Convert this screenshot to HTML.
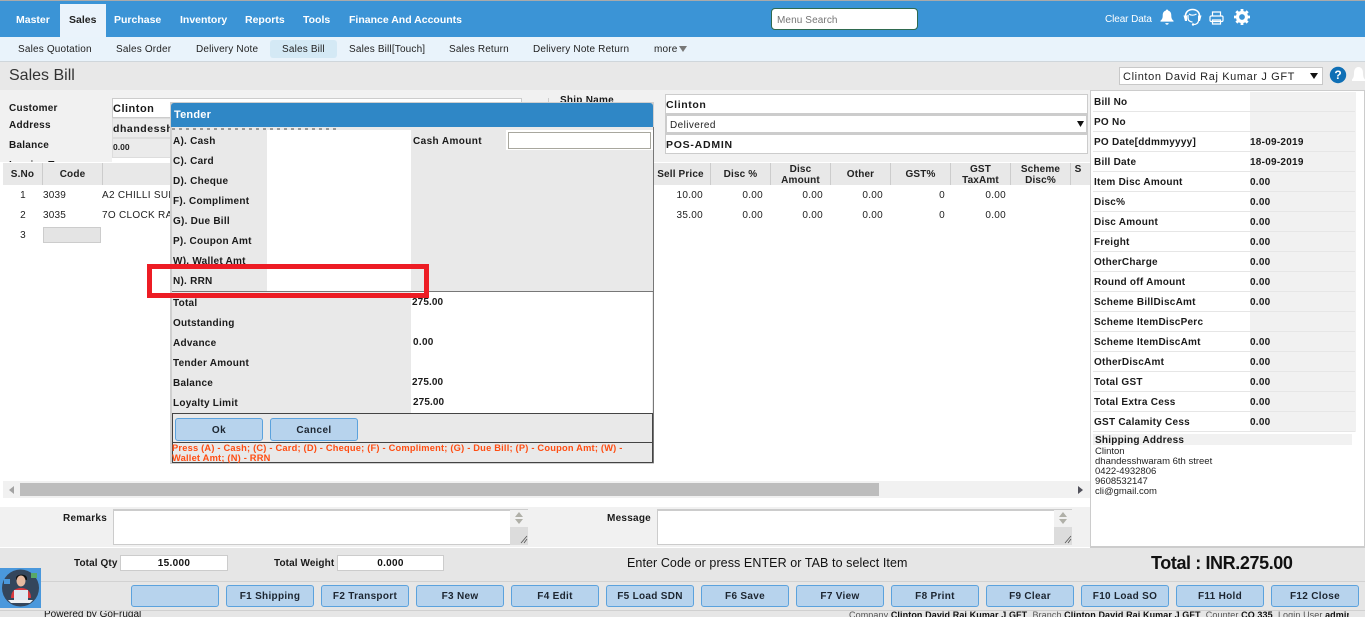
<!DOCTYPE html>
<html><head><meta charset="utf-8"><title>Sales Bill</title>
<style>
html,body{margin:0;padding:0;width:1365px;height:617px;overflow:hidden;background:#fff}
body{position:relative;font-family:"Liberation Sans",Arial,sans-serif;font-size:10px;color:#111}
.b,.t,.m,.s,.l,.v,.n,.h,.k{position:absolute;white-space:nowrap;line-height:12px}
.t,.m,.s,.l,.v,.n,.h{margin-top:1px}
.b{box-sizing:border-box}
.m{color:#fff;font-weight:bold;font-size:10.5px;letter-spacing:0;top:13px}
.s{color:#222;font-size:10px;letter-spacing:.17px;top:43px}
.l{font-weight:bold;font-size:10px;letter-spacing:.25px;color:#1a1a1a}
.v{font-weight:bold;font-size:10px;letter-spacing:.25px;color:#1a1a1a;left:1250px}
.n{font-size:10px;letter-spacing:.3px;color:#222;text-align:right;width:60px}
.h{font-weight:bold;font-size:10px;letter-spacing:.15px;color:#222;text-align:center;line-height:11px}
.k{box-sizing:border-box;top:585px;width:88px;height:22px;background:#b7d3ed;border:1px solid #5ba2dd;border-radius:3px;text-align:center;font-weight:bold;font-size:10px;letter-spacing:.3px;line-height:21px;color:#1c2530}
.rule{position:absolute;left:1093px;width:262px;height:1px;background:#e6e6e6}
</style></head><body>

<!-- top bar -->
<div class="b" style="left:0;top:0;width:1365px;height:1px;background:#aaa"></div>
<div class="b" style="left:0;top:1px;width:1365px;height:36px;background:#3b94d6"></div>
<div class="b" style="left:60px;top:4px;width:46px;height:33px;background:#eaf3fb"></div>
<span class="m" style="left:16px">Master</span>
<span class="m" style="left:69px;color:#222">Sales</span>
<span class="m" style="left:114px">Purchase</span>
<span class="m" style="left:180px">Inventory</span>
<span class="m" style="left:245px">Reports</span>
<span class="m" style="left:303px">Tools</span>
<span class="m" style="left:349px">Finance And Accounts</span>
<div class="b" style="left:771px;top:8px;width:147px;height:22px;background:#fff;border:1px solid #2f6a4f;border-radius:4px"></div>
<span class="t" style="left:777px;top:14px;font-size:10px;letter-spacing:.1px;color:#757575">Menu Search</span>
<span class="t" style="left:1105px;top:13px;color:#fff;font-size:10px;letter-spacing:-.1px">Clear Data</span>
<svg class="b" style="left:1160px;top:9px" width="14" height="16" viewBox="0 0 15 17"><path fill="#fff" d="M7.500 .5c.8 0 1.300.5 1.300 1.200 2.300.6 3.300 2.500 3.300 5 0 3 .7 4.400 2.400 5.800v1H.5v-1c1.700-1.400 2.400-2.800 2.400-5.800 0-2.500 1-4.400 3.300-5 0-.7.5-1.200 1.300-1.200zM5.700 15h3.600c0 1-.8 1.700-1.800 1.700S5.700 16 5.700 15z"/></svg>
<svg class="b" style="left:1183px;top:8px" width="19" height="18" viewBox="0 0 19 18" fill="none" stroke="#fff"><path stroke-width="1.600" d="M2.500 9.500C2 4.500 5 1.500 9.500 1.500s7.500 3 7 8"/><path fill="#fff" stroke="none" d="M.5 7.500H4V13H2zM18.500 7.500H15V13h2z"/><path stroke-width="1.300" d="M6 6c2 1.500 5 1.500 7.500 0M5 7v3c0 2.500 2 4 4.500 4"/><path stroke-width="1.200" d="M15.500 13c-.5 2.500-2.500 3.500-5 3.500"/><circle cx="10" cy="16.500" r="1.200" fill="#fff" stroke="none"/></svg>
<svg class="b" style="left:1209px;top:11px" width="15" height="14" viewBox="0 0 15 14" fill="none" stroke="#fff" stroke-width="1.200"><path d="M3.500 5V1h8v4"/><rect x="1" y="5" width="13" height="5.500" rx="1.200"/><path d="M3.500 9h8v4h-8z"/></svg>
<svg class="b" style="left:1234px;top:9px" width="16" height="16" viewBox="0 0 16 16"><circle cx="8" cy="8" r="4.500" fill="none" stroke="#fff" stroke-width="3.200"/><path d="M8 0v16M0 8h16M2.300 2.300l11.400 11.400M13.700 2.300L2.300 13.700" stroke="#fff" stroke-width="2.800" stroke-dasharray="3 10 3 100"/></svg>

<!-- sub nav -->
<div class="b" style="left:0;top:37px;width:1365px;height:24px;background:#e9f3fb"></div>
<div class="b" style="left:0;top:61px;width:1365px;height:1px;background:#cfd6db"></div>
<div class="b" style="left:270px;top:40px;width:67px;height:18px;background:#d4e9f5;border-radius:3px"></div>
<span class="s" style="left:18px">Sales Quotation</span>
<span class="s" style="left:116px">Sales Order</span>
<span class="s" style="left:196px">Delivery Note</span>
<span class="s" style="left:282px">Sales Bill</span>
<span class="s" style="left:349px">Sales Bill[Touch]</span>
<span class="s" style="left:449px">Sales Return</span>
<span class="s" style="left:533px">Delivery Note Return</span>
<span class="s" style="left:654px">more</span>
<svg class="b" style="left:679px;top:46px" width="8" height="6"><path d="M0 0h8L4 6z" fill="#777"/></svg>

<!-- title -->
<div class="b" style="left:0;top:62px;width:1365px;height:28px;background:#e8e8e8"></div>
<span class="t" style="left:9px;top:65px;font-size:16px;line-height:20px;color:#333">Sales Bill</span>
<div class="b" style="left:1119px;top:67px;width:204px;height:18px;background:#fff;border:1px solid #c8c8c8"></div>
<span class="t" style="left:1123px;top:70px;font-size:11px;letter-spacing:.62px;color:#222">Clinton David Raj Kumar J GFT</span>
<svg class="b" style="left:1310px;top:73px" width="8" height="6"><path d="M0 0h8L4 6z" fill="#111"/></svg>
<svg class="b" style="left:1329px;top:66px" width="18" height="18"><circle cx="9" cy="9" r="8.200" fill="#0f6fb5"/><text x="9" y="13" text-anchor="middle" font-family="Liberation Sans" font-weight="bold" font-size="12" fill="#fff">?</text></svg>
<svg class="b" style="left:1352px;top:66px" width="13" height="18"><path fill="#fff" d="M6.500 1C9.500 1 11 3.500 11 7c0 3 .5 5 2 6.500V15H0v-1.500C1.500 12 2 10 2 7c0-3.500 1.500-6 4.500-6z"/></svg>

<!-- left form -->
<div class="b" style="left:0;top:90px;width:1090px;height:72px;background:#f1f1f1"></div>
<span class="l" style="left:9px;top:102px">Customer</span>
<span class="l" style="left:9px;top:119px">Address</span>
<span class="l" style="left:9px;top:139px">Balance</span>
<span class="l" style="left:9px;top:159px;height:2px;overflow:hidden">Invoice Type</span>
<div class="b" style="left:112px;top:98px;width:410px;height:20px;background:#fff;border:1px solid #ccc"></div>
<span class="l" style="left:113px;top:102px;font-size:11px;letter-spacing:.5px">Clinton</span>
<div class="b" style="left:112px;top:118px;width:410px;height:20px;background:#ebebeb;border:1px solid #ddd"></div>
<span class="l" style="left:113px;top:122px;font-size:10.500px;letter-spacing:.55px">dhandesshwaram 6th street</span>
<div class="b" style="left:112px;top:138px;width:410px;height:20px;background:#ebebeb;border:1px solid #ddd"></div>
<span class="t" style="left:113px;top:140px;font-size:8.500px;font-weight:bold;color:#222">0.00</span>
<div class="b" style="left:112px;top:158px;width:410px;height:4px;background:#fff"></div>
<div class="b" style="left:525px;top:127px;width:12px;height:4px;background:#ccc"></div>
<div class="b" style="left:548px;top:98px;width:1px;height:32px;background:#ccc"></div>
<span class="l" style="left:560px;top:94px;height:8px;overflow:hidden">Ship Name</span>

<div class="b" style="left:665px;top:94px;width:423px;height:20px;background:#fff;border:1px solid #ccc"></div>
<span class="l" style="left:666px;top:98px;font-size:10.500px;letter-spacing:.6px">Clinton</span>
<div class="b" style="left:665px;top:114px;width:423px;height:20px;background:#fff;border:2px solid #ccc"></div>
<span class="t" style="left:670px;top:119px;font-size:10px;letter-spacing:.4px;color:#222">Delivered</span>
<svg class="b" style="left:1077px;top:121px" width="7" height="6"><path d="M0 0h7L3.500 6z" fill="#111"/></svg>
<div class="b" style="left:665px;top:134px;width:423px;height:20px;background:#fff;border:1px solid #ccc"></div>
<span class="l" style="left:666px;top:138px;font-size:10.500px;letter-spacing:.75px">POS-ADMIN</span>

<!-- table -->
<div class="b" style="left:0;top:162px;width:1090px;height:1px;background:#fff"></div>
<div class="b" style="left:3px;top:163px;width:1087px;height:22px;background:#e8e8e8"></div>
<div class="b" style="left:42px;top:163px;width:1px;height:22px;background:#ccc"></div>
<div class="b" style="left:102px;top:163px;width:1px;height:22px;background:#ccc"></div>
<div class="b" style="left:710px;top:163px;width:1px;height:22px;background:#ccc"></div>
<div class="b" style="left:770px;top:163px;width:1px;height:22px;background:#ccc"></div>
<div class="b" style="left:830px;top:163px;width:1px;height:22px;background:#ccc"></div>
<div class="b" style="left:890px;top:163px;width:1px;height:22px;background:#ccc"></div>
<div class="b" style="left:950px;top:163px;width:1px;height:22px;background:#ccc"></div>
<div class="b" style="left:1010px;top:163px;width:1px;height:22px;background:#ccc"></div>
<div class="b" style="left:1070px;top:163px;width:1px;height:22px;background:#ccc"></div>
<span class="h" style="left:3px;width:39px;top:168px">S.No</span>
<span class="h" style="left:43px;width:59px;top:168px">Code</span>
<span class="h" style="left:651px;width:59px;top:168px">Sell Price</span>
<span class="h" style="left:711px;width:59px;top:168px">Disc %</span>
<span class="h" style="left:771px;width:59px;top:163px">Disc<br>Amount</span>
<span class="h" style="left:831px;width:59px;top:168px">Other</span>
<span class="h" style="left:891px;width:59px;top:168px">GST%</span>
<span class="h" style="left:951px;width:59px;top:163px">GST<br>TaxAmt</span>
<span class="h" style="left:1011px;width:59px;top:163px">Scheme<br>Disc%</span>
<span class="h" style="left:1071px;width:14px;top:163px">S</span>

<span class="n" style="left:-34px;top:189px">1</span>
<span class="n" style="left:-34px;top:209px">2</span>
<span class="n" style="left:-34px;top:229px">3</span>
<span class="t" style="left:43px;top:189px;letter-spacing:.2px;color:#222">3039</span>
<span class="t" style="left:43px;top:209px;letter-spacing:.2px;color:#222">3035</span>
<span class="t" style="left:102px;top:189px;letter-spacing:.3px;color:#222">A2 CHILLI SUPER</span>
<span class="t" style="left:102px;top:209px;letter-spacing:.3px;color:#222">7O CLOCK RAZOR</span>
<div class="b" style="left:43px;top:227px;width:58px;height:16px;background:#e4e4e4;border:1px solid #ccc"></div>
<span class="n" style="left:643px;top:189px">10.00</span><span class="n" style="left:703px;top:189px">0.00</span><span class="n" style="left:763px;top:189px">0.00</span><span class="n" style="left:823px;top:189px">0.00</span><span class="n" style="left:885px;top:189px">0</span><span class="n" style="left:946px;top:189px">0.00</span>
<span class="n" style="left:643px;top:209px">35.00</span><span class="n" style="left:703px;top:209px">0.00</span><span class="n" style="left:763px;top:209px">0.00</span><span class="n" style="left:823px;top:209px">0.00</span><span class="n" style="left:885px;top:209px">0</span><span class="n" style="left:946px;top:209px">0.00</span>

<!-- scrollbar -->
<div class="b" style="left:3px;top:481px;width:1087px;height:17px;background:#f1f1f1"></div>
<div class="b" style="left:20px;top:483px;width:859px;height:13px;background:#bdbdbd"></div>
<svg class="b" style="left:9px;top:486px" width="5" height="8"><path d="M5 0v8L0 4z" fill="#a3a3a3"/></svg>
<svg class="b" style="left:1078px;top:486px" width="5" height="8"><path d="M0 0v8l5-4z" fill="#50505a"/></svg>

<!-- remarks -->
<div class="b" style="left:0;top:507px;width:1090px;height:40px;background:#f1f1f1"></div>
<span class="l" style="left:63px;top:512px">Remarks</span>
<div class="b" style="left:113px;top:509px;width:415px;height:36px;background:#fff;border:1px solid #ccc;border-top-width:2px"></div>
<div class="b" style="left:510px;top:510px;width:18px;height:35px;background:#f1f1f1"></div>
<div class="b" style="left:510px;top:527px;width:18px;height:18px;background:#dcdcdc"></div>
<svg class="b" style="left:510px;top:510px" width="18" height="35"><path d="M5 7l4-5 4 5zM5 9h8l-4 5z" fill="#b0b0a8"/><path d="M11 33l6-7M14 33l3-4" stroke="#555" stroke-width=".8"/></svg>
<span class="l" style="left:607px;top:512px">Message</span>
<div class="b" style="left:657px;top:509px;width:415px;height:36px;background:#fff;border:1px solid #ccc;border-top-width:2px"></div>
<div class="b" style="left:1054px;top:510px;width:18px;height:35px;background:#f1f1f1"></div>
<div class="b" style="left:1054px;top:527px;width:18px;height:18px;background:#dcdcdc"></div>
<svg class="b" style="left:1054px;top:510px" width="18" height="35"><path d="M5 7l4-5 4 5zM5 9h8l-4 5z" fill="#b0b0a8"/><path d="M11 33l6-7M14 33l3-4" stroke="#555" stroke-width=".8"/></svg>

<!-- right panel -->
<div class="b" style="left:1090px;top:90px;width:275px;height:458px;background:#fff;border:1px solid #ccc;border-bottom-width:2px"></div>
<div class="b" style="left:1250px;top:92px;width:106px;height:340px;background:#f1f1f1"></div>
<div class="rule" style="top:111px"></div><div class="rule" style="top:131px"></div><div class="rule" style="top:151px"></div><div class="rule" style="top:171px"></div><div class="rule" style="top:191px"></div><div class="rule" style="top:211px"></div><div class="rule" style="top:231px"></div><div class="rule" style="top:251px"></div><div class="rule" style="top:271px"></div><div class="rule" style="top:291px"></div><div class="rule" style="top:311px"></div><div class="rule" style="top:331px"></div><div class="rule" style="top:351px"></div><div class="rule" style="top:371px"></div><div class="rule" style="top:391px"></div><div class="rule" style="top:411px"></div><div class="rule" style="top:431px"></div>
<span class="l" style="left:1094px;top:96px">Bill No</span>
<span class="l" style="left:1094px;top:116px">PO No</span>
<span class="l" style="left:1094px;top:136px">PO Date[ddmmyyyy]</span><span class="v" style="top:136px">18-09-2019</span>
<span class="l" style="left:1094px;top:156px">Bill Date</span><span class="v" style="top:156px">18-09-2019</span>
<span class="l" style="left:1094px;top:176px">Item Disc Amount</span><span class="v" style="top:176px">0.00</span>
<span class="l" style="left:1094px;top:196px">Disc%</span><span class="v" style="top:196px">0.00</span>
<span class="l" style="left:1094px;top:216px">Disc Amount</span><span class="v" style="top:216px">0.00</span>
<span class="l" style="left:1094px;top:236px">Freight</span><span class="v" style="top:236px">0.00</span>
<span class="l" style="left:1094px;top:256px">OtherCharge</span><span class="v" style="top:256px">0.00</span>
<span class="l" style="left:1094px;top:276px">Round off Amount</span><span class="v" style="top:276px">0.00</span>
<span class="l" style="left:1094px;top:296px">Scheme BillDiscAmt</span><span class="v" style="top:296px">0.00</span>
<span class="l" style="left:1094px;top:316px">Scheme ItemDiscPerc</span>
<span class="l" style="left:1094px;top:336px">Scheme ItemDiscAmt</span><span class="v" style="top:336px">0.00</span>
<span class="l" style="left:1094px;top:356px">OtherDiscAmt</span><span class="v" style="top:356px">0.00</span>
<span class="l" style="left:1094px;top:376px">Total GST</span><span class="v" style="top:376px">0.00</span>
<span class="l" style="left:1094px;top:396px">Total Extra Cess</span><span class="v" style="top:396px">0.00</span>
<span class="l" style="left:1094px;top:416px">GST Calamity Cess</span><span class="v" style="top:416px">0.00</span>
<div class="b" style="left:1093px;top:434px;width:259px;height:11px;background:#f1f1f1"></div>
<span class="l" style="left:1095px;top:434px">Shipping Address</span>
<div class="t" style="left:1095px;top:446px;font-size:9.500px;line-height:10px;color:#222">Clinton<br>dhandesshwaram 6th street<br>0422-4932806<br>9608532147<br>cli@gmail.com</div>

<!-- bottom -->
<div class="b" style="left:0;top:548px;width:1365px;height:69px;background:#e6e6e6"></div>
<div class="b" style="left:0;top:581px;width:1365px;height:1px;background:#d2d2d2"></div>
<div class="b" style="left:0;top:610px;width:1365px;height:1px;background:#d0d0d0"></div>
<span class="l" style="left:74px;top:557px;letter-spacing:.1px">Total Qty</span>
<div class="b" style="left:120px;top:555px;width:108px;height:16px;background:#fff;border:1px solid #ccc;text-align:center;font-weight:bold;font-size:10px;line-height:15px;letter-spacing:.3px">15.000</div>
<span class="l" style="left:274px;top:557px;letter-spacing:.1px">Total Weight</span>
<div class="b" style="left:337px;top:555px;width:107px;height:16px;background:#fff;border:1px solid #ccc;text-align:center;font-weight:bold;font-size:10px;line-height:15px;letter-spacing:.3px">0.000</div>
<span class="t" style="left:627px;top:555px;font-size:12.500px;line-height:14px;letter-spacing:.08px;color:#111">Enter Code or press ENTER or TAB to select Item</span>
<span class="t" style="left:1151px;top:552px;font-size:18px;line-height:20px;font-weight:bold;letter-spacing:-.4px;color:#111">Total : INR.275.00</span>

<div class="k" style="left:131px"></div>
<div class="k" style="left:226px">F1 Shipping</div>
<div class="k" style="left:321px">F2 Transport</div>
<div class="k" style="left:416px">F3 New</div>
<div class="k" style="left:511px">F4 Edit</div>
<div class="k" style="left:606px">F5 Load SDN</div>
<div class="k" style="left:701px">F6 Save</div>
<div class="k" style="left:796px">F7 View</div>
<div class="k" style="left:891px">F8 Print</div>
<div class="k" style="left:986px">F9 Clear</div>
<div class="k" style="left:1081px">F10 Load SO</div>
<div class="k" style="left:1176px">F11 Hold</div>
<div class="k" style="left:1271px">F12 Close</div>

<div class="b" style="left:44px;top:611px;height:6px;width:100px;overflow:hidden;font-size:10px;line-height:8px;white-space:nowrap">Powered by GoFrugal</div>
<div class="b" style="left:849px;top:611px;height:6px;width:500px;overflow:hidden;font-size:9px;line-height:9px;white-space:nowrap;color:#555;letter-spacing:.1px">Company <b style="color:#111">Clinton David Raj Kumar J GFT</b> &nbsp;Branch <b style="color:#111">Clinton David Raj Kumar J GFT</b> &nbsp;Counter <b style="color:#111">CO 335</b> &nbsp;Login User <b style="color:#111">admin</b></div>

<!-- avatar -->
<svg class="b" style="left:0;top:568px" width="41" height="40" viewBox="0 0 41 40">
<rect width="41" height="40" fill="#4a98dc"/>
<circle cx="20.500" cy="20" r="18.500" fill="#34465c"/>
<rect x="4" y="11" width="6" height="5" fill="#4a98dc"/>
<rect x="31" y="5" width="6" height="5" fill="#58a868"/>
<path d="M16 10c0-4 10-5 11 0v2H16z" fill="#111"/>
<ellipse cx="21" cy="13" rx="4.500" ry="5.500" fill="#e6b9a0"/>
<path d="M11 30c0-7 4-10 10-10s10 3 10 10z" fill="#d8393f"/>
<rect x="14" y="22" width="14" height="10" fill="#dfe8f0"/>
<path d="M8 32h25l-3 3H11z" fill="#eef0f2"/>
</svg>

<!-- modal -->
<div class="b" style="left:170px;top:102px;width:484px;height:362px;background:#cfcfcf"></div>
<div class="b" style="left:172px;top:127px;width:481px;height:336px;background:#e9e9e9"></div>
<div class="b" style="left:171px;top:103px;width:482px;height:24px;background:#2f87c6;border-radius:3px 3px 0 0"></div>
<span class="t" style="left:174px;top:108px;color:#fff;font-weight:bold;font-size:11px;letter-spacing:.2px">Tender</span>
<div class="b" style="left:172px;top:128px;width:165px;height:2px;background:repeating-linear-gradient(90deg,#999 0 3px,#e9e9e9 3px 7px)"></div>
<div class="b" style="left:267px;top:130px;width:144px;height:161px;background:#fff"></div>
<div class="b" style="left:506px;top:130px;width:147px;height:20px;background:#fff"></div>
<div class="b" style="left:508px;top:132px;width:143px;height:17px;background:#fff;border:1px solid #a8a79e"></div>
<div class="b" style="left:653px;top:127px;width:1px;height:336px;background:#777"></div>
<span class="l" style="left:173px;top:135px">A). Cash</span>
<span class="l" style="left:173px;top:155px">C). Card</span>
<span class="l" style="left:173px;top:175px">D). Cheque</span>
<span class="l" style="left:173px;top:195px">F). Compliment</span>
<span class="l" style="left:173px;top:215px">G). Due Bill</span>
<span class="l" style="left:173px;top:235px">P). Coupon Amt</span>
<span class="l" style="left:173px;top:255px">W). Wallet Amt</span>
<span class="l" style="left:173px;top:275px">N). RRN</span>
<span class="l" style="left:413px;top:135px;letter-spacing:.4px">Cash Amount</span>

<div class="b" style="left:172px;top:291px;width:481px;height:1px;background:#777"></div>
<div class="b" style="left:411px;top:292px;width:241px;height:121px;background:#fff"></div>
<span class="l" style="left:173px;top:297px">Total</span><span class="l" style="left:412px;top:296px;letter-spacing:.1px">275.00</span>
<span class="l" style="left:173px;top:317px">Outstanding</span>
<span class="l" style="left:173px;top:337px">Advance</span><span class="l" style="left:413px;top:336px;letter-spacing:.3px">0.00</span>
<span class="l" style="left:173px;top:357px">Tender Amount</span>
<span class="l" style="left:173px;top:377px">Balance</span><span class="l" style="left:412px;top:376px;letter-spacing:.1px">275.00</span>
<span class="l" style="left:173px;top:397px">Loyalty Limit</span><span class="l" style="left:413px;top:396px;letter-spacing:.1px">275.00</span>

<div class="b" style="left:172px;top:413px;width:481px;height:30px;border:1px solid #444"></div>
<div class="b" style="left:175px;top:418px;width:88px;height:23px;background:#b7d3ed;border:1px solid #5ba2dd;border-radius:3px;text-align:center;font-weight:bold;font-size:10px;letter-spacing:.4px;line-height:23px;color:#1c2530">Ok</div>
<div class="b" style="left:270px;top:418px;width:88px;height:23px;background:#b7d3ed;border:1px solid #5ba2dd;border-radius:3px;text-align:center;font-weight:bold;font-size:10px;letter-spacing:.4px;line-height:23px;color:#1c2530">Cancel</div>
<div class="b" style="left:172px;top:442px;width:481px;height:21px;border:1px solid #444"></div>
<div class="t" style="left:172px;top:442px;width:455px;white-space:normal;font-size:9.300px;line-height:10px;font-weight:bold;letter-spacing:.2px;color:#ff4d12">Press (A) - Cash; (C) - Card; (D) - Cheque; (F) - Compliment; (G) - Due Bill; (P) - Coupon Amt; (W) - Wallet Amt; (N) - RRN</div>

<!-- red annotation -->
<div class="b" style="left:147px;top:264px;width:282px;height:34px;border:5px solid #ed1c24"></div>

</body></html>
